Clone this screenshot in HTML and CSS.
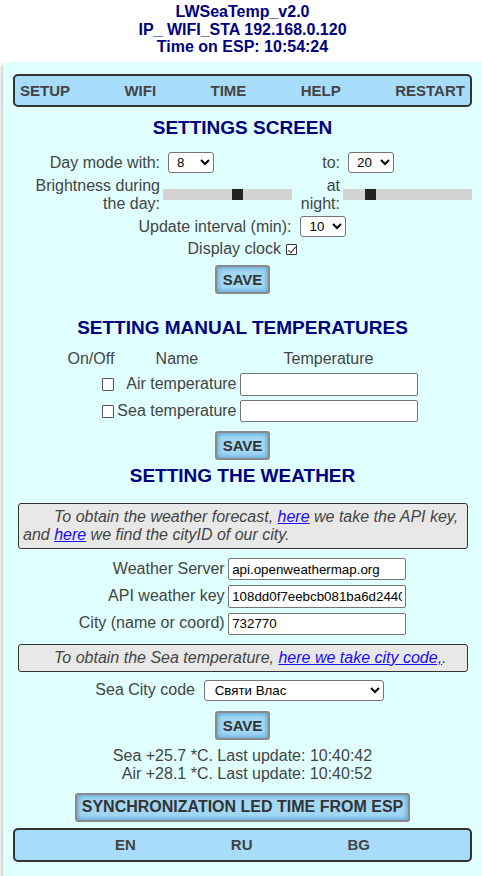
FILE: index.html
```html
<!DOCTYPE html>
<html lang="en">
<head>
<meta charset="utf-8">
<title>LWSeaTemp_v2.0</title>
<link rel="stylesheet" href="styles.css">
</head>
<body>
<header class="top">
  <div>LWSeaTemp_v2.0</div>
  <div>IP_ WIFI_STA 192.168.0.120</div>
  <div>Time on ESP: 10:54:24</div>
</header>
<main class="panel">
  <nav class="menu">
    <a>SETUP</a>
    <a>WIFI</a>
    <a>TIME</a>
    <a>HELP</a>
    <a>RESTART</a>
  </nav>

  <h2 class="title t1">SETTINGS SCREEN</h2>
  <div class="mode-grid">
    <label class="lbl">Day mode with:</label>
    <div class="cell"><select class="sel sel-sm"><option>8</option></select></div>
    <label class="lbl">to:</label>
    <div class="cell"><select class="sel sel-sm"><option>20</option></select></div>
    <label class="lbl">Brightness during the day:</label>
    <div class="cell"><input type="range" class="slider" min="0" max="60" value="35"></div>
    <label class="lbl">at night:</label>
    <div class="cell"><input type="range" class="slider" min="0" max="60" value="11"></div>
  </div>
  <div class="line interval"><span>Update interval (min):</span><select class="sel sel-sm"><option>10</option></select></div>
  <div class="line clock"><span>Display clock</span><input type="checkbox" class="chk" checked></div>
  <div class="btn-row save1"><button class="btn">SAVE</button></div>

  <h2 class="title t2">SETTING MANUAL TEMPERATURES</h2>
  <div class="temp-grid">
    <div class="th">On/Off</div>
    <div class="th">Name</div>
    <div class="th">Temperature</div>
    <div class="tc-chk"><input type="checkbox" class="chk chk-row"></div>
    <div class="tc-name">Air temperature</div>
    <div><input type="text" class="txt"></div>
    <div class="tc-chk"><input type="checkbox" class="chk chk-row"></div>
    <div class="tc-name">Sea temperature</div>
    <div><input type="text" class="txt"></div>
  </div>
  <div class="btn-row save2"><button class="btn">SAVE</button></div>

  <h2 class="title t3">SETTING THE WEATHER</h2>
  <div class="info info1">To obtain the weather forecast, <a href="#">here</a> we take the API key, and <a href="#">here</a> we find the cityID of our city.</div>
  <div class="weather-grid">
    <label class="wl">Weather Server</label>
    <input type="text" class="txt" value="api.openweathermap.org">
    <label class="wl">API weather key</label>
    <input type="text" class="txt" value="108dd0f7eebcb081ba6d24400e6d8f7a">
    <label class="wl">City (name or coord)</label>
    <input type="text" class="txt" value="732770">
  </div>
  <div class="info info2">To obtain the Sea temperature, <a href="#">here we take city code,</a>.</div>
  <div class="line seacity"><span>Sea City code</span><select class="sel sel-wide"><option>Святи Влас</option></select></div>
  <div class="btn-row save3"><button class="btn">SAVE</button></div>

  <div class="status-wrap">
    <div class="status">
      <div>Sea +25.7 *C. Last update: 10:40:42</div>
      <div>Air +28.1 *C. Last update: 10:40:52</div>
    </div>
  </div>
  <div class="btn-row sync-row"><button class="btn btn-sync">SYNCHRONIZATION LED TIME FROM ESP</button></div>

  <nav class="menu lang">
    <a>EN</a>
    <a>RU</a>
    <a>BG</a>
  </nav>
</main>
</body>
</html>
```
FILE: styles.css
```css
* { box-sizing: border-box; }
html, body { margin: 0; padding: 0; }
body {
  font-family: "Liberation Sans", Arial, sans-serif;
  background: #ffffff;
  width: 482px;
  height: 876px;
  overflow: hidden;
  color: #444444;
}
.top {
  margin-left: 3px;
  width: 479px;
  height: 62px;
  padding-top: 3.3px;
  text-align: center;
  color: #000080;
  font-weight: bold;
  font-size: 16px;
  line-height: 17.5px;
}
.panel {
  display: block;
  margin-left: 3px;
  width: 479px;
  min-height: 830px;
  background: #e0ffff;
  padding: 12px 10px 20px 10px;
  box-shadow: -1px 3px 4px rgba(0, 0, 0, 0.3);
}
.menu {
  display: flex;
  justify-content: space-between;
  padding: 6px 5px;
  border: 2px solid #333333;
  border-radius: 5px;
  background: #a8dcfb;
  font-size: 15px;
  line-height: 17.25px;
  font-weight: bold;
  color: #444444;
}
.menu.lang { justify-content: space-evenly; margin-top: 6px; height: 33.7px; }
.title {
  margin: 0;
  text-align: center;
  color: #000080;
  font-size: 19px;
  line-height: 22px;
  font-weight: bold;
}
.t1 { margin-top: 10.2px; }
.t2 { margin-top: 23.2px; }
.t3 { margin-top: 4.8px; }

.mode-grid {
  display: grid;
  grid-template-columns: 127px 129px 45px 129px;
  column-gap: 3px;
  row-gap: 3.5px;
  align-items: center;
  margin: 12.8px 0 0 20px;
  font-size: 16px;
  line-height: 18px;
}
.lbl { text-align: right; }
.cell { display: flex; align-items: center; }
.cell .sel { margin-left: 5px; }

.sel {
  font-family: "Liberation Sans", Arial, sans-serif;
  font-size: 13.33px;
  color: #000000;
  background: #ffffff;
  border: 1px solid #767676;
  border-radius: 3px;
  height: 21px;
  padding: 0 0 0 4px;
}
.sel-sm { width: 46px; }
.sel-wide { width: 180px; height: 20.3px; padding-left: 6px; }

.slider {
  -webkit-appearance: none;
  appearance: none;
  width: 129px;
  height: 11px;
  margin: 0;
  background: #d3d3d3;
  outline: none;
}
.slider::-webkit-slider-thumb {
  -webkit-appearance: none;
  appearance: none;
  width: 11px;
  height: 11px;
  background: #222222;
  border: none;
  border-radius: 0;
}

.line {
  display: flex;
  justify-content: center;
  align-items: center;
  font-size: 16px;
  line-height: 18.4px;
}
.interval { margin-top: 3.5px; gap: 9px; height: 21px; }
.clock { margin-top: 3px; gap: 5px; }

.chk {
  -webkit-appearance: none;
  appearance: none;
  margin: 0;
  width: 11.5px;
  height: 11.5px;
  border: 1px solid #333333;
  border-radius: 1px;
  background: #ffffff;
  position: relative;
}
.chk:checked::after {
  content: "";
  position: absolute;
  left: 3px;
  top: 0px;
  width: 3px;
  height: 7px;
  border: solid #333333;
  border-width: 0 1.3px 1.3px 0;
  transform: rotate(40deg);
}
.chk-row { width: 12.7px; height: 12.5px; border-color: #555555; }

.btn-row { display: flex; justify-content: center; }
.btn {
  font-family: "Liberation Sans", Arial, sans-serif;
  font-weight: bold;
  font-size: 15px;
  line-height: 17.25px;
  color: #333333;
  background: #a2d8f5;
  border: 2px solid #8a8a8a;
  border-radius: 3px;
  box-shadow: inset 0 0 5px 1px #5a9fcc;
  padding: 4px 6px;
  margin: 0;
}
.save1 { margin-top: 6.3px; }
.save2 { margin-top: 8.6px; }
.save3 { margin-top: 10.4px; }
.btn-sync { font-size: 16px; line-height: 18.4px; padding: 3.5px 5px; }
.sync-row { margin-top: 9.2px; }

.temp-grid {
  display: grid;
  grid-template-columns: auto auto 178px;
  column-gap: 3px;
  row-gap: 4.6px;
  justify-content: center;
  align-items: center;
  margin-top: 11.1px;
  font-size: 16px;
  line-height: 18.4px;
  white-space: nowrap;
}
.th { text-align: center; }
.tc-chk { display: flex; justify-content: flex-end; }
.tc-name { text-align: right; }

.txt {
  font-family: "Liberation Sans", Arial, sans-serif;
  font-size: 13.33px;
  color: #000000;
  width: 178px;
  height: 22.2px;
  border: 1px solid #767676;
  border-radius: 2px;
  padding: 1px 3px;
  background: #ffffff;
  margin: 0;
  display: block;
}

.info {
  margin: 16.3px 4px 0 5px;
  background: #e8e8e8;
  border: 1px solid #333333;
  border-radius: 3px;
  padding: 3.5px 4px;
  font-style: italic;
  font-size: 16px;
  line-height: 18.4px;
  text-indent: 31px;
  color: #444444;
}
.info a { color: #1a0dff; }
.info2 { margin-top: 9px; padding: 4px 4px; }

.weather-grid {
  display: grid;
  grid-template-columns: auto 178px;
  column-gap: 3.6px;
  row-gap: 5px;
  justify-content: center;
  align-items: center;
  margin-top: 9px;
  font-size: 16px;
  line-height: 18.4px;
}
.wl { text-align: right; }

.seacity { margin-top: 8.3px; gap: 8.7px; padding-right: 6px; }

.status-wrap { display: flex; justify-content: center; margin-top: 6.4px; }
.status { text-align: right; font-size: 16px; line-height: 18.4px; }
```
